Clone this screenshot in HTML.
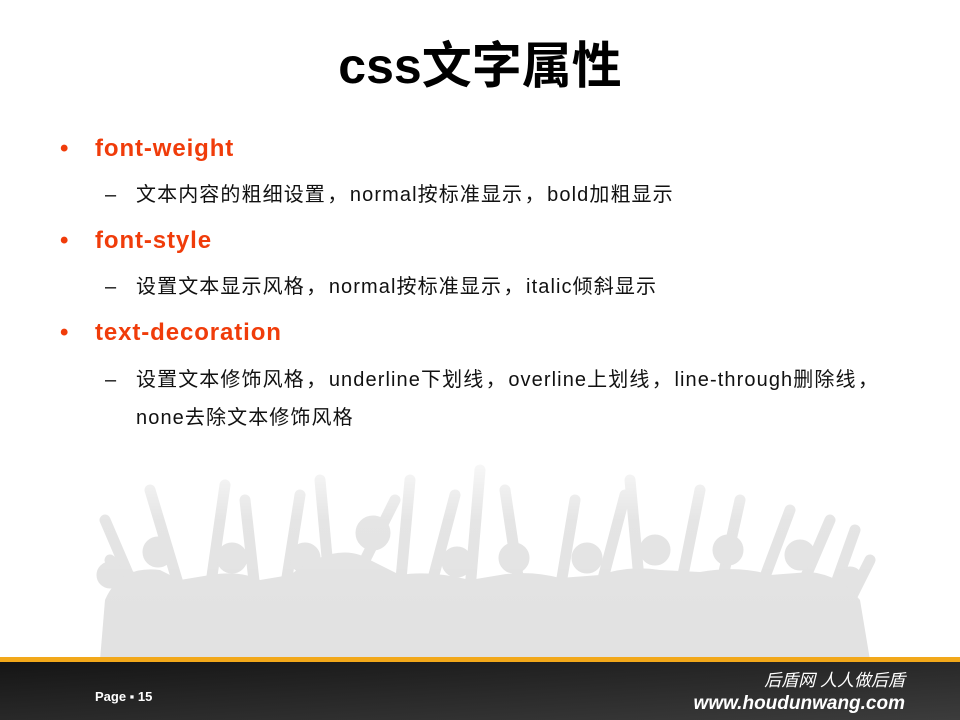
<!DOCTYPE html>
<html><head><meta charset="utf-8"><style>
body{margin:0;width:960px;height:720px;overflow:hidden;background:#fff;position:relative;font-family:"Liberation Sans","Noto Sans CJK SC",sans-serif}
.a{position:absolute;white-space:nowrap}
.t{left:0;width:960px;text-align:center;top:34px;font-size:50px;font-weight:bold;color:#000;line-height:64px}
.b{left:95px;font-size:24px;font-weight:bold;color:#f03c0a;line-height:30px;letter-spacing:0.9px}
.b:before{content:"•";position:absolute;left:-35px}
.s{left:136px;font-size:20px;color:#111;line-height:26px;letter-spacing:1.1px}
.c{display:inline-block;width:24px;text-align:center}
.d{left:105px;font-size:20px;color:#111;line-height:26px}
</style></head><body>
<svg class="a" style="left:0;top:0" width="960" height="720">
<defs><linearGradient id="f" x1="0" y1="0" x2="0" y2="1"><stop offset="0" stop-color="#fff" stop-opacity="1"/><stop offset="0.45" stop-color="#fff" stop-opacity="0.1"/><stop offset="1" stop-color="#fff" stop-opacity="0"/></linearGradient>
<linearGradient id="ft" x1="0" y1="0" x2="1" y2="1"><stop offset="0" stop-color="#151515"/><stop offset="1" stop-color="#3c3c3c"/></linearGradient></defs>
<g fill="#e2e2e2" stroke="#e2e2e2" stroke-linecap="round">
<g stroke-width="11">
<path d="M135 590 L105 520 M180 590 L150 490 M210 590 L225 485 M255 590 L245 500 M285 590 L300 495 M330 590 L320 480 M350 590 L395 500 M400 590 L410 480 M430 590 L455 495 M470 590 L480 470 M520 590 L505 490 M560 590 L575 500 M600 590 L625 495 M640 590 L630 480 M680 590 L700 490 M720 590 L740 500 M760 590 L790 510 M800 590 L830 520 M830 600 L855 530 M160 600 L110 560 M840 620 L870 560"/>
</g>
<circle cx="158" cy="552" r="15"/><circle cx="232" cy="558" r="15"/><circle cx="305" cy="558" r="15"/><circle cx="373" cy="533" r="17"/><circle cx="457" cy="562" r="15"/><circle cx="514" cy="558" r="15"/><circle cx="587" cy="558" r="15"/><circle cx="655" cy="550" r="15"/><circle cx="728" cy="550" r="15"/><circle cx="800" cy="555" r="15"/><circle cx="110" cy="575" r="13"/><circle cx="850" cy="580" r="13"/>
<path stroke="none" d="M100 660 L105 600 Q120 565 160 570 L180 580 L210 575 Q240 570 260 580 L290 575 Q330 545 360 555 L400 575 Q430 570 470 580 L500 575 Q530 570 560 578 L600 575 Q630 565 660 570 L700 572 Q740 565 770 575 L810 572 Q840 575 860 600 L870 660 Z"/>
</g>
<rect x="0" y="440" width="960" height="180" fill="url(#f)"/>
<rect x="0" y="657" width="960" height="5" fill="#f2a81a"/>
<rect x="0" y="662" width="960" height="58" fill="url(#ft)"/>
</svg>
<div class="a t">css文字属性</div>
<div class="a b" style="top:134px">font-weight</div>
<div class="a d" style="top:182px">–</div>
<div class="a s" style="top:182px">文本内容的粗细设置<span class="c">，</span>normal按标准显示<span class="c">，</span>bold加粗显示</div>
<div class="a b" style="top:226px">font-style</div>
<div class="a d" style="top:274px">–</div>
<div class="a s" style="top:274px">设置文本显示风格<span class="c">，</span>normal按标准显示<span class="c">，</span>italic倾斜显示</div>
<div class="a b" style="top:318px">text-decoration</div>
<div class="a d" style="top:367px">–</div>
<div class="a s" style="top:367px">设置文本修饰风格<span class="c">，</span>underline下划线<span class="c">，</span>overline上划线<span class="c">，</span>line-through删除线<span class="c">，</span></div>
<div class="a s" style="top:405px">none去除文本修饰风格</div>
<div class="a" style="left:95px;top:689px;color:#fff;font-size:13px;font-weight:bold;line-height:16px">Page ▪ 15</div>
<div class="a" style="right:55px;top:670px;color:#fff;font-size:17px;font-style:italic;line-height:22px">后盾网 人人做后盾</div>
<div class="a" style="right:55px;top:693px;color:#fff;font-size:19px;font-weight:bold;font-style:italic;line-height:22px">www.houdunwang.com</div>
</body></html>
